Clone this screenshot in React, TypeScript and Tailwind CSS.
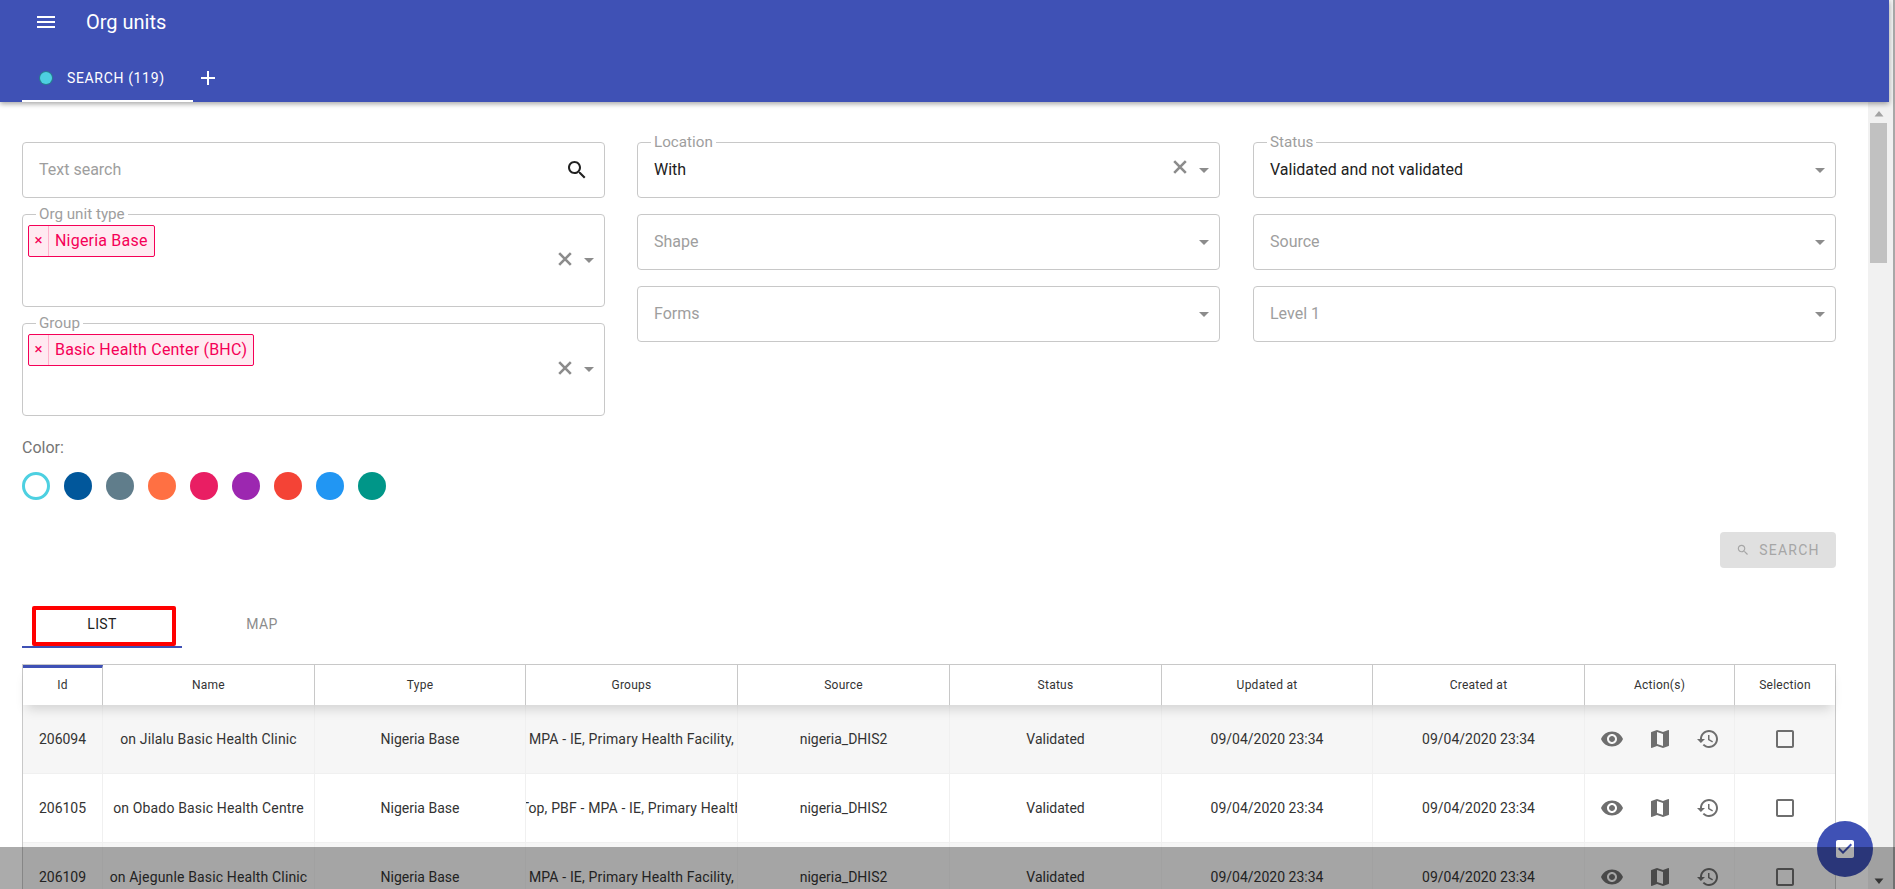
import { ReactNode } from "react";

const colors = ["bg-[#01579b]", "bg-[#607d8b]", "bg-[#ff7043]", "bg-[#e91e63]", "bg-[#9c27b0]", "bg-[#f44336]", "bg-[#2196f3]", "bg-[#009688]"];

const columns = [
    { label: "Id", width: "w-[80px]" },
    { label: "Name", width: "w-[212px]" },
    { label: "Type", width: "w-[211px]" },
    { label: "Groups", width: "w-[212px]" },
    { label: "Source", width: "w-[212px]" },
    { label: "Status", width: "w-[212px]" },
    { label: "Updated at", width: "w-[211px]" },
    { label: "Created at", width: "w-[212px]" },
    { label: "Action(s)", width: "w-[150px]" },
    { label: "Selection", width: "min-w-0 flex-1" },
];

const rows = [
    { id: "206094", name: "on Jilalu Basic Health Clinic", groups: "MPA - IE, Primary Health Facility,", bg: "bg-[#f6f6f6]" },
    { id: "206105", name: "on Obado Basic Health Centre", groups: "Top, PBF - MPA - IE, Primary Health", bg: "bg-white" },
    { id: "206109", name: "on Ajegunle Basic Health Clinic", groups: "MPA - IE, Primary Health Facility,", bg: "bg-[#f6f6f6]" },
];

function Caret() {
    return (
        <svg width="10" height="5" viewBox="0 0 10 5" className="shrink-0 fill-[#8c8c8c]">
            <path d="M0 0h10L5 5z" />
        </svg>
    );
}

function Cross({ className = "" }: { className?: string }) {
    return (
        <svg width="14" height="14" viewBox="0 0 14 14" className={`shrink-0 stroke-[#8c8c8c] ${className}`} strokeWidth="2.6">
            <path d="M1.2 1.2l11.6 11.6M12.8 1.2 1.2 12.8" />
        </svg>
    );
}

function Field({ label, children, height = "h-[56px]" }: { label?: string; children?: ReactNode; height?: string }) {
    return (
        <div className={`relative flex ${height} items-start rounded border border-[#c8c8c8] bg-white`}>
            {label && (
                <span className="absolute -top-[9px] left-[13px] bg-white px-[3px] text-[15.2px] leading-[16px] text-[#9e9e9e]">
                    {label}
                </span>
            )}
            {children}
        </div>
    );
}

function Select({ label, placeholder, value, clear }: { label?: string; placeholder?: string; value?: string; clear?: boolean }) {
    return (
        <Field label={label}>
            <div className={`flex-1 pl-[16px] pt-[17px] text-[16px] leading-[19px] ${value ? "text-[#212121]" : "text-[#9e9e9e]"}`}>
                {value ?? placeholder}
            </div>
            <div className="flex h-full items-center pr-[10px]">
                {clear && <Cross className="-mt-[7px] mr-[12px]" />}
                <Caret />
            </div>
        </Field>
    );
}

function MultiSelect({ label, chip }: { label: string; chip: string }) {
    return (
        <Field label={label} height="h-[93px]">
            <div className="flex-1 pl-[5px] pt-[10px]">
                <div className="inline-flex h-[32px] items-stretch rounded-[2px] border border-[#f50057] bg-[#ffeaf1] text-[#f50057]">
                    <span className="flex w-[20px] items-center justify-center border-r border-[#ffb3cd] pb-[2px] text-[15px] leading-none">×</span>
                    <span className="flex items-center px-[6px] text-[16px] leading-none tracking-[0.2px]">{chip}</span>
                </div>
            </div>
            <div className="flex h-full items-center pr-[10px]">
                <Cross className="-mt-[4px] mr-[12px]" />
                <Caret />
            </div>
        </Field>
    );
}

function Actions() {
    return (
        <div className="flex w-full items-center justify-center gap-[24px]">
            <svg width="24" height="24" viewBox="0 0 24 24" className="fill-[#6e6e6e]">
                <path d="M12 4.5C7 4.5 2.73 7.61 1 12c1.73 4.39 6 7.5 11 7.5s9.27-3.11 11-7.5c-1.73-4.39-6-7.5-11-7.5zM12 17c-2.76 0-5-2.24-5-5s2.24-5 5-5 5 2.24 5 5-2.24 5-5 5zm0-8c-1.66 0-3 1.34-3 3s1.34 3 3 3 3-1.34 3-3-1.34-3-3-3z" />
            </svg>
            <svg width="24" height="24" viewBox="0 0 24 24" className="fill-[#6e6e6e]">
                <path d="m20.5 3-.16.03L15 5.1 9 3 3.36 4.9c-.21.07-.36.25-.36.48V20.5c0 .28.22.5.5.5l.16-.03L9 18.9l6 2.1 5.64-1.9c.21-.07.36-.25.36-.48V3.5c0-.28-.22-.5-.5-.5zM15 19l-6-2.11V5l6 2.11V19z" />
            </svg>
            <svg width="24" height="24" viewBox="0 0 24 24" className="fill-[#6e6e6e]">
                <path d="M13 3c-4.97 0-9 4.03-9 9H1l3.89 3.89.07.14L9 12H6c0-3.87 3.13-7 7-7s7 3.13 7 7-3.13 7-7 7c-1.93 0-3.68-.79-4.94-2.06l-1.42 1.42C8.27 19.99 10.51 21 13 21c4.97 0 9-4.03 9-9s-4.03-9-9-9zm-1 5v5l4.28 2.54.72-1.21-3.5-2.08V8H12z" />
            </svg>
        </div>
    );
}

function CheckBox() {
    return (
        <svg width="24" height="24" viewBox="0 0 24 24" className="fill-[#6e6e6e]">
            <path d="M19 5v14H5V5h14m0-2H5c-1.1 0-2 .9-2 2v14c0 1.1.9 2 2 2h14c1.1 0 2-.9 2-2V5c0-1.1-.9-2-2-2z" />
        </svg>
    );
}

function Cell({ width, children, border = true }: { width: string; children: ReactNode; border?: boolean }) {
    return (
        <div className={`flex h-full ${width} shrink-0 items-center justify-center overflow-hidden whitespace-nowrap ${border ? "border-r border-[#f0f0f0]" : ""}`}>
            {children}
        </div>
    );
}

export default function App() {
    return (
        <div className="relative flex h-[889px] w-[1895px] overflow-hidden bg-white font-['Roboto',sans-serif]">
            <div className="flex w-[1889px] shrink-0 flex-col">
                <header className="relative z-10 h-[102px] shrink-0 bg-[#3f51b5] text-white shadow-[0_2px_5px_rgba(0,0,0,0.35)]">
                    <div className="flex h-[44px] items-center pl-[34px]">
                        <svg width="24" height="24" viewBox="0 0 24 24" className="fill-white">
                            <path d="M3 18h18v-2H3v2zm0-5h18v-2H3v2zm0-7v2h18V6H3z" />
                        </svg>
                        <span className="ml-[28px] text-[20px] leading-none">Org units</span>
                    </div>
                    <div className="ml-[22px] mt-[13px] flex h-[45px] items-center">
                        <div className="flex h-[45px] w-[171px] items-center border-b-2 border-white pb-[1px] pl-[18px]">
                            <span className="h-[12px] w-[12px] rounded-full bg-[#4dd0e1] ring-1 ring-[#26808f]" />
                            <span className="ml-[15px] text-[14px] leading-none tracking-[0.65px]">SEARCH (119)</span>
                        </div>
                        <svg width="24" height="24" viewBox="0 0 24 24" className="ml-[3px] mb-[4px] fill-white">
                            <path d="M19 13h-6v6h-2v-6H5v-2h6V5h2v6h6v2z" />
                        </svg>
                    </div>
                </header>

                <div className="flex min-h-0 flex-1">
                    <main className="min-w-0 flex-1 pl-[22px] pr-[32px] pt-[40px]">
                        <div className="grid grid-cols-[583px_583px_minmax(0,1fr)] gap-x-[32px]">
                            <div className="flex flex-col gap-[16px]">
                                <Field>
                                    <div className="flex-1 pl-[16px] pt-[17px] text-[16px] leading-[19px] text-[#9e9e9e]">Text search</div>
                                    <svg width="24" height="24" viewBox="0 0 24 24" className="mr-[15px] mt-[15px] fill-[#212121]">
                                        <path d="M15.5 14h-.79l-.28-.27C15.41 12.59 16 11.11 16 9.5 16 5.91 13.09 3 9.5 3S3 5.91 3 9.5 5.91 16 9.5 16c1.61 0 3.09-.59 4.23-1.57l.27.28v.79l5 4.99L20.49 19l-4.99-5zm-6 0C7.01 14 5 11.99 5 9.5S7.01 5 9.5 5 14 7.01 14 9.5 11.99 14 9.5 14z" />
                                    </svg>
                                </Field>
                                <MultiSelect label="Org unit type" chip="Nigeria Base" />
                                <MultiSelect label="Group" chip="Basic Health Center (BHC)" />
                            </div>
                            <div className="flex flex-col gap-[16px]">
                                <Select label="Location" value="With" clear />
                                <Select placeholder="Shape" />
                                <Select placeholder="Forms" />
                            </div>
                            <div className="ml-[1px] flex flex-col gap-[16px]">
                                <Select label="Status" value="Validated and not validated" />
                                <Select placeholder="Source" />
                                <Select placeholder="Level 1" />
                            </div>
                        </div>

                        <div className="mt-[22px] text-[16px] leading-[19px] text-[#757575]">Color:</div>
                        <div className="mt-[15px] flex gap-[14px]">
                            <span className="h-[28px] w-[28px] rounded-full border-[3px] border-[#4dd0e1]" />
                            {colors.map((color) => (
                                <span key={color} className={`h-[28px] w-[28px] rounded-full ${color}`} />
                            ))}
                        </div>

                        <div className="mt-[32px] flex justify-end">
                            <div className="flex h-[36px] w-[116px] items-center justify-center rounded bg-[#e0e0e0] text-[14px] tracking-[1.2px] text-[#a6a6a6]">
                                <svg width="14" height="14" viewBox="0 0 24 24" className="mr-[9px] fill-[#a6a6a6]">
                                    <path d="M15.5 14h-.79l-.28-.27C15.41 12.59 16 11.11 16 9.5 16 5.91 13.09 3 9.5 3S3 5.91 3 9.5 5.91 16 9.5 16c1.61 0 3.09-.59 4.23-1.57l.27.28v.79l5 4.99L20.49 19l-4.99-5zm-6 0C7.01 14 5 11.99 5 9.5S7.01 5 9.5 5 14 7.01 14 9.5 11.99 14 9.5 14z" />
                                </svg>
                                SEARCH
                            </div>
                        </div>

                        <div className="mt-[32px] flex h-[48px] text-[14px] tracking-[0.4px]">
                            <div className="relative flex w-[160px] items-center justify-center border-b-2 border-[#3f51b5] pt-[2px] text-[#212121]">
                                LIST
                                <span className="absolute left-[10px] top-[6px] h-[40px] w-[144px] rounded-[2px] border-[4px] border-[#ff0000]" />
                            </div>
                            <div className="flex w-[160px] items-center justify-center border-b-2 border-transparent pt-[2px] text-[#8c8c8c]">MAP</div>
                        </div>

                        <div className="mt-[16px] border border-b-0 border-[#c8c8c8] text-[14px] text-[#333333]">
                            <div className="relative z-[1] flex h-[40px] bg-white text-[12px] tracking-[0.25px] shadow-[0_8px_12px_-4px_rgba(0,0,0,0.15)]">
                                {columns.map((col, i) => (
                                    <div key={col.label} className={`flex h-full ${col.width} shrink-0 items-center justify-center ${i < 9 ? "border-r border-[#c8c8c8]" : ""} ${i === 0 ? "border-t-[3px] border-t-[#3f51b5] pb-[3px]" : ""}`}>
                                        {col.label}
                                    </div>
                                ))}
                            </div>
                            {rows.map((row) => (
                                <div key={row.id} className={`flex h-[69px] border-b border-[#f0f0f0] ${row.bg}`}>
                                    <Cell width={columns[0].width}>{row.id}</Cell>
                                    <Cell width={columns[1].width}><span className="tracking-[0.15px]">{row.name}</span></Cell>
                                    <Cell width={columns[2].width}>Nigeria Base</Cell>
                                    <Cell width={columns[3].width}><span className="tracking-[0.15px]">{row.groups}</span></Cell>
                                    <Cell width={columns[4].width}>nigeria_DHIS2</Cell>
                                    <Cell width={columns[5].width}>Validated</Cell>
                                    <Cell width={columns[6].width}>09/04/2020 23:34</Cell>
                                    <Cell width={columns[7].width}>09/04/2020 23:34</Cell>
                                    <Cell width={columns[8].width}><Actions /></Cell>
                                    <Cell width={columns[9].width} border={false}><CheckBox /></Cell>
                                </div>
                            ))}
                        </div>
                    </main>

                    {/* scrollbar */}
                    <div className="flex h-full w-[21px] shrink-0 flex-col items-center bg-[#f1f1f1] pt-[9px]">
                        <svg width="10" height="6" viewBox="0 0 10 6" className="fill-[#a3a3a3]"><path d="M5 0l4.5 5.5H.5z" /></svg>
                        <div className="mt-[6px] h-[140px] w-[17px] bg-[#c1c1c1]" />
                        <svg width="10" height="6" viewBox="0 0 10 6" className="mb-[5px] mt-auto fill-[#505050]"><path d="M5 6l4.5-5.5H.5z" /></svg>
                    </div>
                </div>
            </div>

            {/* outer window edge */}
            <div className="flex h-full flex-1">
                <div className="h-full flex-1 bg-[#f1f1f1]" />
                <div className="h-full w-[2px] bg-[#a8a8a8]" />
            </div>

            <button className="absolute bottom-[12px] left-[1817px] z-20 flex h-[56px] w-[56px] items-center justify-center rounded-full bg-[#3f51b5]">
                <svg width="24" height="24" viewBox="0 0 24 24" className="fill-white">
                    <path d="M19 3H5c-1.11 0-2 .9-2 2v14c0 1.1.89 2 2 2h14c1.11 0 2-.9 2-2V5c0-1.1-.89-2-2-2zm-9 14-5-5 1.41-1.41L10 14.17l7.59-7.59L19 8l-9 9z" />
                </svg>
            </button>

            {/* bottom dim bar over the page */}
            <div className="absolute bottom-0 left-0 z-30 h-[42px] w-full bg-black/[0.33]" />
        </div>
    );
}
